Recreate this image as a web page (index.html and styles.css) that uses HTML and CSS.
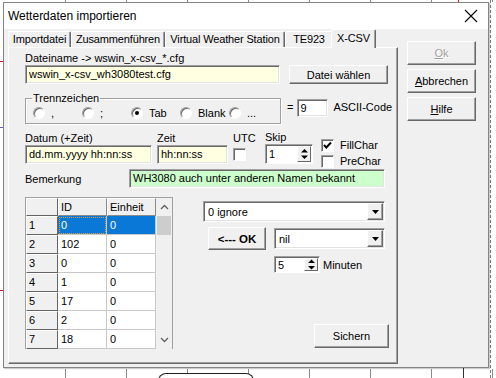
FILE: index.html
```html
<!DOCTYPE html>
<html lang="de">
<head>
    <meta charset="UTF-8">
    <meta name="viewport" content="width=device-width, initial-scale=1.0">
    <title>Wetterdaten importieren</title>
    <link rel="stylesheet" href="styles.css">
</head>
<body>
<div class="desk">
    <!-- Diagramm im Hintergrund -->
    <div class="chart">
        <div class="chart-vdash"></div>
        <div class="chart-ticks-top"></div>
        <div class="chart-ticks"></div>
        <div class="chart-curve"></div>
        <div class="chart-bar"></div>
        <div class="chart-mark mark-top"></div>
        <div class="chart-mark mark-l1"></div>
        <div class="chart-mark mark-l2"></div>
        <div class="chart-mark mark-l3"></div>
    </div>

    <!-- Dialog -->
    <div class="window">
        <div class="titlebar">
            <span>Wetterdaten importieren</span>
            <svg class="close" width="14" height="14" viewBox="0 0 14 14">
                <path d="M1 1 L13 13 M13 1 L1 13" stroke="#000" stroke-width="1.1" fill="none"/>
            </svg>
        </div>

        <div class="main">
            <div class="tabs-area">
                <div class="tabstrip">
                    <div class="tab t1">Importdatei</div>
                    <div class="tab t2">Zusammenführen</div>
                    <div class="tab t3">Virtual Weather Station</div>
                    <div class="tab t4">TE923</div>
                    <div class="tab t5 active">X-CSV</div>
                </div>

                <div class="panel">
                    <div class="lbl">Dateiname -&gt; wswin_x-csv_*.cfg</div>
                    <div class="row file-row">
                        <div class="edit yellow file-edit">wswin_x-csv_wh3080test.cfg</div>
                        <div class="btn file-btn">Datei wählen</div>
                    </div>

                    <div class="row sep-row">
                        <fieldset class="group">
                            <legend>Trennzeichen</legend>
                            <div class="opts">
                                <div class="opt"><span class="radio"></span>,</div>
                                <div class="opt"><span class="radio"></span>;</div>
                                <div class="opt"><span class="radio on"></span>Tab</div>
                                <div class="opt"><span class="radio"></span>Blank</div>
                                <div class="opt"><span class="radio"></span>...</div>
                            </div>
                        </fieldset>
                        <span class="eq">=</span>
                        <div class="edit ascii-edit">9</div>
                        <span class="ascii-lbl">ASCII-Code</span>
                    </div>

                    <div class="row fields">
                        <div class="field f-datum">
                            <div class="lbl">Datum (+Zeit)</div>
                            <div class="edit yellow">dd.mm.yyyy hh:nn:ss</div>
                        </div>
                        <div class="field f-zeit">
                            <div class="lbl">Zeit</div>
                            <div class="edit yellow">hh:nn:ss</div>
                        </div>
                        <div class="field f-utc">
                            <div class="lbl">UTC</div>
                            <span class="check utc-check"></span>
                        </div>
                        <div class="field f-skip">
                            <div class="lbl skip-lbl">Skip</div>
                            <div class="spin skip-spin">
                                <span class="spin-val">1</span>
                                <span class="spin-btns">
                                    <svg width="9" height="14" viewBox="0 0 9 14"><path d="M1 5.5 L4.5 2 L8 5.5 Z M1 8.5 L4.5 12 L8 8.5 Z" fill="#000"/></svg>
                                </span>
                            </div>
                        </div>
                        <div class="field f-chars">
                            <div class="check-row">
                                <span class="check">
                                    <svg width="11" height="11" viewBox="0 0 11 11"><path d="M2 5 L4.3 7.5 L9 2.5" stroke="#000" stroke-width="2" fill="none"/></svg>
                                </span>FillChar
                            </div>
                            <div class="check-row"><span class="check"></span>PreChar</div>
                        </div>
                    </div>

                    <div class="row note-row">
                        <span class="note-lbl">Bemerkung</span>
                        <div class="edit green note-edit">WH3080 auch unter anderen Namen bekannt</div>
                    </div>

                    <div class="row lower">
                        <div class="grid">
                            <table>
                                <tr class="head">
                                    <td class="fix"></td><td class="fix">ID</td><td class="fix">Einheit</td>
                                </tr>
                                <tr class="sel">
                                    <td class="fix">1</td><td class="focus">0</td><td>0</td>
                                </tr>
                                <tr><td class="fix">2</td><td>102</td><td>0</td></tr>
                                <tr><td class="fix">3</td><td>0</td><td>0</td></tr>
                                <tr><td class="fix">4</td><td>1</td><td>0</td></tr>
                                <tr><td class="fix">5</td><td>17</td><td>0</td></tr>
                                <tr><td class="fix">6</td><td>2</td><td>0</td></tr>
                                <tr><td class="fix">7</td><td>18</td><td>0</td></tr>
                            </table>
                            <div class="vscroll">
                                <span class="arrow">
                                    <svg width="9" height="6" viewBox="0 0 9 6"><path d="M1 5 L4.5 1.5 L8 5" stroke="#606060" stroke-width="1.3" fill="none"/></svg>
                                </span>
                                <span class="thumb"></span>
                                <span class="track"></span>
                                <span class="arrow">
                                    <svg width="9" height="6" viewBox="0 0 9 6"><path d="M1 1 L4.5 4.5 L8 1" stroke="#606060" stroke-width="1.3" fill="none"/></svg>
                                </span>
                            </div>
                        </div>

                        <div class="lower-right">
                            <div class="combo combo-main">
                                <span class="combo-val">0 ignore</span>
                                <span class="drop"><svg width="7" height="4" viewBox="0 0 7 4"><path d="M0 0 H7 L3.5 4 Z" fill="#000"/></svg></span>
                            </div>
                            <div class="ok-row">
                                <div class="btn ok-btn">&lt;--- OK</div>
                                <div class="combo combo-nil">
                                    <span class="combo-val">nil</span>
                                    <span class="drop"><svg width="7" height="4" viewBox="0 0 7 4"><path d="M0 0 H7 L3.5 4 Z" fill="#000"/></svg></span>
                                </div>
                            </div>
                            <div class="min-row">
                                <div class="spin min-spin">
                                    <span class="spin-val">5</span>
                                    <span class="spin-btns">
                                        <svg width="9" height="13" viewBox="0 0 9 13"><path d="M1 5 L4.5 1.5 L8 5 Z M1 8 L4.5 11.5 L8 8 Z" fill="#000"/></svg>
                                    </span>
                                </div>
                                <span class="min-lbl">Minuten</span>
                            </div>
                            <div class="btn save-btn">Sichern</div>
                        </div>
                    </div>
                </div>
            </div>

            <div class="side">
                <div class="btn disabled"><u>O</u>k</div>
                <div class="btn"><u>A</u>bbrechen</div>
                <div class="btn"><u>H</u>ilfe</div>
            </div>
        </div>
    </div>
</div>
</body>
</html>
```

FILE: styles.css
```css
* {
    box-sizing: border-box;
}

body {
    margin: 0;
    font-family: "Liberation Sans", Arial, sans-serif;
    font-size: 11px;
    color: #000;
}

.desk {
    position: relative;
    width: 496px;
    height: 378px;
    overflow: hidden;
    background: #fff;
}

/* Diagramm hinter dem Fenster */
.chart {
    position: absolute;
    inset: 0;
}

.chart-vdash {
    position: absolute;
    left: 490px;
    top: 0;
    height: 378px;
    border-left: 1px dashed #7a7a7a;
}

.chart-ticks,
.chart-ticks-top {
    position: absolute;
    left: 0;
    width: 496px;
    background-image: repeating-linear-gradient(to right, transparent 0, transparent 60px, #8a8a8a 60px, #8a8a8a 61px);
    background-position: 5px 0;
}

.chart-ticks {
    top: 369px;
    height: 9px;
}

.chart-ticks-top {
    top: 0;
    height: 2px;
}

.chart-curve {
    position: absolute;
    left: 158px;
    top: 373px;
    width: 96px;
    height: 12px;
    border: 1px solid #222;
    border-bottom: none;
    border-radius: 8px 8px 0 0;
    background: #fff;
}

.chart-bar {
    position: absolute;
    left: 463px;
    top: 368px;
    width: 1px;
    height: 10px;
    background: #333;
}

.chart-mark {
    position: absolute;
    height: 1px;
    width: 3px;
    left: 0;
    background: #d02020;
}

.mark-top { left: 458px; top: 0; width: 1px; height: 2px; }
.mark-l1 { top: 61px; }
.mark-l2 { top: 127px; background: #6060c0; }
.mark-l3 { top: 290px; }

/* Fenster */
.window {
    position: absolute;
    left: 3px;
    top: 2px;
    width: 486px;
    height: 366px;
    background: #f0f0f0;
    border: 1px solid #848484;
    box-shadow: 1px 1px 1px rgba(0, 0, 0, 0.2);
    display: flex;
    flex-direction: column;
}

.titlebar {
    height: 26px;
    background: #fff;
    display: flex;
    align-items: center;
    justify-content: space-between;
    padding: 0 10px 0 4px;
    font-size: 12px;
}

.main {
    display: flex;
}

.tabs-area {
    margin-left: 4px;
    width: 390px;
    display: flex;
    flex-direction: column;
}

.tabstrip {
    height: 18px;
    display: flex;
    align-items: flex-end;
}

.tab {
    height: 16px;
    border: 1px solid;
    border-color: #fff #696969 transparent #fff;
    border-bottom: none;
    border-radius: 2px 2px 0 0;
    box-shadow: inset -1px 0 #a0a0a0;
    text-align: center;
    line-height: 15px;
    white-space: nowrap;
    letter-spacing: -0.15px;
}

.t1 { width: 63px; }
.t2 { width: 94px; }
.t3 { width: 120px; }
.t4 { width: 48px; }
.t5 { width: 45px; }

.tab.active {
    height: 19px;
    margin: 0 0 -1px -2px;
    background: #f0f0f0;
    position: relative;
    z-index: 1;
    line-height: 16px;
}

.panel {
    height: 317px;
    border: 1px solid;
    border-color: #fff #696969 #696969 #fff;
    box-shadow: inset -1px -1px #a0a0a0;
    padding: 4px 0 0 16px;
}

.lbl {
    height: 13px;
    line-height: 13px;
    white-space: nowrap;
}

.row {
    display: flex;
}

/* Eingabefelder */
.edit {
    height: 19px;
    background: #fff;
    border: 1px solid;
    border-color: #a0a0a0 #fff #fff #a0a0a0;
    box-shadow: inset 1px 1px #696969, inset -1px -1px #e3e3e3;
    padding: 0 3px;
    line-height: 17px;
    white-space: nowrap;
    overflow: hidden;
}

.yellow { background: #ffffe1; }
.green { background: #ccffcc; }

.btn {
    height: 24px;
    background: #f0f0f0;
    border: 1px solid;
    border-color: #fff #696969 #696969 #fff;
    box-shadow: inset -1px -1px #a0a0a0;
    display: flex;
    align-items: center;
    justify-content: center;
    white-space: nowrap;
}

.btn u {
    text-decoration-thickness: 1px;
    text-underline-offset: 1px;
}

.btn.disabled {
    color: #a0a0a0;
    text-shadow: 1px 1px #fff;
}

.file-row {
    height: 19px;
}

.file-edit {
    width: 255px;
}

.file-btn {
    width: 99px;
    height: 19px;
    margin-left: 9px;
}

/* Trennzeichen */
.sep-row {
    margin-top: 8px;
    height: 32px;
    align-items: flex-start;
}

.group {
    width: 256px;
    height: 32px;
    margin: 0;
    padding: 0 0 0 7px;
    border: 1px solid #a0a0a0;
    box-shadow: 1px 1px #fff, inset 1px 1px #fff;
}

.group legend {
    padding: 0 1px;
    margin-left: -1px;
    line-height: 13px;
}

.opts {
    display: flex;
    margin-top: 1px;
}

.opt {
    width: 49px;
    display: flex;
    align-items: center;
    gap: 6px;
    height: 13px;
}

.radio {
    width: 12px;
    height: 12px;
    border-radius: 50%;
    border: 1px solid;
    border-color: #a0a0a0 #fff #fff #a0a0a0;
    box-shadow: inset 1px 1px #696969;
    background: #fff;
    display: flex;
    align-items: center;
    justify-content: center;
    flex: none;
}

.radio.on::after {
    content: "";
    width: 4px;
    height: 4px;
    border-radius: 50%;
    background: #000;
}

.eq {
    margin: 9px 0 0 6px;
}

.ascii-edit {
    width: 31px;
    height: 18px;
    margin: 7px 0 0 4px;
    padding-left: 2px;
}

.ascii-lbl {
    margin: 9px 0 0 5px;
}

/* Datum / Zeit */
.fields {
    margin-top: 8px;
    height: 37px;
}

.field {
    display: flex;
    flex-direction: column;
}

.f-datum { width: 127px; }
.f-zeit { width: 71px; margin-left: 5px; }
.f-utc { width: 32px; margin-left: 5px; }
.f-skip { width: 48px; }
.f-chars { margin: 5px 0 0 8px; }

.check {
    width: 13px;
    height: 13px;
    background: #fff;
    border: 1px solid;
    border-color: #a0a0a0 #fff #fff #a0a0a0;
    box-shadow: inset 1px 1px #696969;
    display: flex;
    align-items: center;
    justify-content: center;
    flex: none;
}

.utc-check {
    margin-top: 3px;
}

.skip-lbl {
    height: 12px;
    line-height: 11px;
}

.check-row {
    display: flex;
    align-items: center;
    gap: 6px;
    height: 16px;
}

.spin {
    display: flex;
    background: #fff;
    border: 1px solid;
    border-color: #a0a0a0 #fff #fff #a0a0a0;
    box-shadow: inset 1px 1px #696969;
}

.spin-val {
    flex: 1;
    padding-left: 3px;
    display: flex;
    align-items: center;
}

.spin-btns {
    width: 14px;
    margin: 1px 1px 1px 0;
    background: #f0f0f0;
    border: 1px solid;
    border-color: #fff #696969 #696969 #fff;
    display: flex;
    align-items: center;
    justify-content: center;
}

.skip-spin {
    width: 48px;
    height: 20px;
}

/* Bemerkung */
.note-row {
    margin-top: 0;
    height: 19px;
    align-items: center;
}

.note-lbl {
    width: 104px;
}

.note-edit {
    width: 256px;
}

/* Tabelle */
.lower {
    margin-top: 9px;
    height: 151px;
}

.grid {
    width: 148px;
    border: 1px solid #a0a0a0;
    border-bottom: none;
    display: flex;
    background: #fff;
    align-self: flex-start;
}

.grid table {
    border-collapse: separate;
    border-spacing: 0;
    table-layout: fixed;
    width: 130px;
}

.grid td {
    height: 19px;
    padding: 0 0 0 3px;
    border-right: 1px solid #c8c8c8;
    border-bottom: 1px solid #c8c8c8;
    white-space: nowrap;
    line-height: 17px;
}

.grid td:nth-child(1) { width: 32px; }
.grid td:nth-child(2) { width: 49px; }
.grid td:nth-child(3) { width: 49px; }

.grid .head td {
    height: 18px;
}

.grid td.fix {
    background: #f0f0f0;
    border-top: 1px solid #fff;
    border-left: 1px solid #fff;
    border-right: 1px solid #646464;
    border-bottom: 1px solid #646464;
    line-height: 15px;
    padding-left: 2px;
}

.grid .head td.fix:nth-child(n+2) {
    border-right-color: #8a8a8a;
    border-bottom-color: #8a8a8a;
}

.grid .sel td:not(.fix) {
    background: #0a78d7;
    color: #fff;
}

.grid td.focus {
    outline: 1px dotted #e0a040;
    outline-offset: -2px;
}

.vscroll {
    width: 16px;
    background: #f0f0f0;
    display: flex;
    flex-direction: column;
}

.vscroll .arrow {
    height: 18px;
    display: flex;
    align-items: center;
    justify-content: center;
}

.vscroll .thumb {
    height: 19px;
    margin: 0 1px;
    background: #cdcdcd;
}

.vscroll .track {
    flex: 1;
}

.lower-right {
    margin-left: 30px;
    width: 186px;
    display: flex;
    flex-direction: column;
}

.combo {
    display: flex;
    height: 21px;
    background: #fff;
    border: 1px solid;
    border-color: #a0a0a0 #fff #fff #a0a0a0;
    box-shadow: inset 1px 1px #696969, inset -1px -1px #e3e3e3;
}

.combo-val {
    flex: 1;
    padding-left: 4px;
    display: flex;
    align-items: center;
}

.drop {
    width: 16px;
    margin: 1px 1px 1px 0;
    background: #f0f0f0;
    border: 1px solid;
    border-color: #fff #696969 #696969 #fff;
    box-shadow: inset -1px -1px #a0a0a0;
    display: flex;
    align-items: center;
    justify-content: center;
}

.combo-main {
    width: 182px;
    margin-top: 4px;
}

.ok-row {
    display: flex;
    margin-top: 5px;
}

.ok-btn {
    width: 58px;
    height: 23px;
    margin-left: 5px;
    font-weight: bold;
    font-size: 11.5px;
}

.combo-nil {
    width: 111px;
    margin: 1px 0 0 8px;
}

.min-row {
    display: flex;
    align-items: center;
    margin: 6px 0 0 71px;
}

.min-spin {
    width: 46px;
    height: 17px;
}

.min-lbl {
    margin-left: 3px;
}

.save-btn {
    width: 75px;
    margin: auto 0 0 111px;
}

/* Knöpfe rechts */
.side {
    margin: 12px 0 0 9px;
    width: 69px;
    display: flex;
    flex-direction: column;
    gap: 4px;
}
```
